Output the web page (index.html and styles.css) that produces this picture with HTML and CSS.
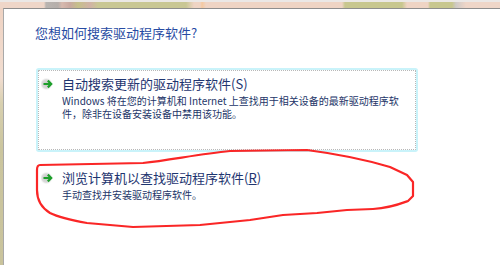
FILE: index.html
```html
<!DOCTYPE html>
<html lang="zh-CN">
<head>
<meta charset="utf-8">
<title>更新驱动程序软件</title>
<link rel="stylesheet" href="styles.css">
</head>
<body>
<div class="desktop">
  <div class="strip-top"></div>
  <div class="row">
    <div class="strip-left"></div>
    <div class="window">
      <h1 class="title">您想如何搜索驱动程序软件?</h1>
      <div class="option option-focus">
        <svg class="arrow" width="14" height="14" viewBox="0 0 14 14">
          <defs><radialGradient id="ga" cx="0.45" cy="0.5" r="0.5"><stop offset="0" stop-color="#c4c4c4"/><stop offset="0.65" stop-color="#dcdcdc"/><stop offset="1" stop-color="#ffffff" stop-opacity="0"/></radialGradient></defs>
          <circle cx="6" cy="7" r="6.8" fill="url(#ga)"/>
          <path d="M2.5 7H10M6.8 3.6L10.2 7L6.8 10.4" stroke="#1d9f2b" stroke-width="2.2" fill="none" stroke-linejoin="miter"/>
        </svg>
        <div class="text">
          <div class="head">自动搜索更新的驱动程序软件(S)</div>
          <div class="desc">Windows 将在您的计算机和 Internet 上查找用于相关设备的最新驱动程序软件，除非在设备安装设备中禁用该功能。</div>
        </div>
      </div>
      <div class="option">
        <svg class="arrow" width="14" height="14" viewBox="0 0 14 14">
          <defs><radialGradient id="gb" cx="0.45" cy="0.5" r="0.5"><stop offset="0" stop-color="#c4c4c4"/><stop offset="0.65" stop-color="#dcdcdc"/><stop offset="1" stop-color="#ffffff" stop-opacity="0"/></radialGradient></defs>
          <circle cx="6" cy="7" r="6.8" fill="url(#gb)"/>
          <path d="M2.5 7H10M6.8 3.6L10.2 7L6.8 10.4" stroke="#1d9f2b" stroke-width="2.2" fill="none" stroke-linejoin="miter"/>
        </svg>
        <div class="text">
          <div class="head">浏览计算机以查找驱动程序软件(<span class="key">R</span>)</div>
          <div class="desc">手动查找并安装驱动程序软件。</div>
        </div>
      </div>
    </div>
  </div>
</div>
<svg class="annotation" width="500" height="265" viewBox="0 0 500 265">
  <path d="M40,165 L143,163 C170,160 200,154 230,151 L307,150 C330,153 360,158 390,167 L407,175 L413,182 L413,196 L408,201 C400,204 390,208 373,209 L347,210 L317,213 L283,215 L250,220 L200,225 L133,227 L87,223 C70,220 58,217 50,213 C42,208 37,200 37,190 L37,170 Q37,165 40,165 Z" fill="none" stroke="#fa2626" stroke-width="2.2" stroke-linejoin="round"/>
</svg>
</body>
</html>
```
FILE: styles.css
```css
* { box-sizing: border-box; }
html, body { margin: 0; padding: 0; }
body {
  width: 500px;
  height: 265px;
  overflow: hidden;
  position: relative;
  background: #ffffff;
  font-family: "Noto Sans CJK SC", "Noto Sans", sans-serif;
}
.desktop {
  display: flex;
  flex-direction: column;
  height: 265px;
}
.strip-top {
  height: 8px;
  flex: none;
  border-top: 2px solid #ebe8e6;
  background: linear-gradient(90deg,
    #efd6c8 0, #efd6c8 44px, #b9b4b0 46px, #b5aeaa 58px,
    #d7b9ae 62px, #c9a9a0 70px, #c5c08a 78px, #d1b2a6 90px,
    #c9c794 98px, #c9c794 186px, #efd4c4 194px, #efd4c4 200px,
    #f5c9a0 202px, #efd4c4 206px, #efd4c4 342px,
    #c8c78f 345px, #c8c78f 402px, #efd4c4 407px, #efd4c4 428px,
    #c8c78f 430px, #c8c78f 452px, #cfcac6 456px, #efd6c8 466px, #efd6c8 500px);
}
.row {
  flex: 1;
  display: flex;
}
.strip-left {
  width: 3px;
  flex: none;
  background: linear-gradient(180deg, #efd3c3 0, #f1ddd0 70px, #d8d0b0 95px, #cbc59e 140px, #c9c39c 265px);
}
.window {
  flex: 1;
  background: #ffffff;
  border-top: 1px solid #8e8e8e;
  border-left: 1px solid #a9a9a9;
  padding: 16px 0 0 31px;
}
.title {
  margin: 0;
  font-size: 13px;
  line-height: 16px;
  font-weight: normal;
  color: #274ba3;
}
.option {
  display: flex;
  align-items: flex-start;
  width: 378px;
  margin-left: 3px;
  padding: 5px 0 0 2px;
  border: 1px solid transparent;
}
.option-focus {
  margin-top: 29px;
  height: 80px;
  border: 1px dotted #b8b8b8;
  border-radius: 1px;
  box-shadow: 0 0 0 2px #c9f3fa;
}
.option + .option {
  margin-top: 14px;
}
.arrow {
  flex: none;
  margin-top: 1px;
  width: 14px;
  height: 14px;
}
.text {
  margin-left: 7px;
  width: 340px;
}
.head {
  font-size: 13px;
  line-height: 16px;
  color: #1e3570;
}
.key { text-decoration: underline; }
.desc {
  margin-top: 2px;
  font-size: 10px;
  line-height: 13px;
  color: #233568;
}
.annotation {
  position: absolute;
  left: 0;
  top: 0;
  pointer-events: none;
}
```
